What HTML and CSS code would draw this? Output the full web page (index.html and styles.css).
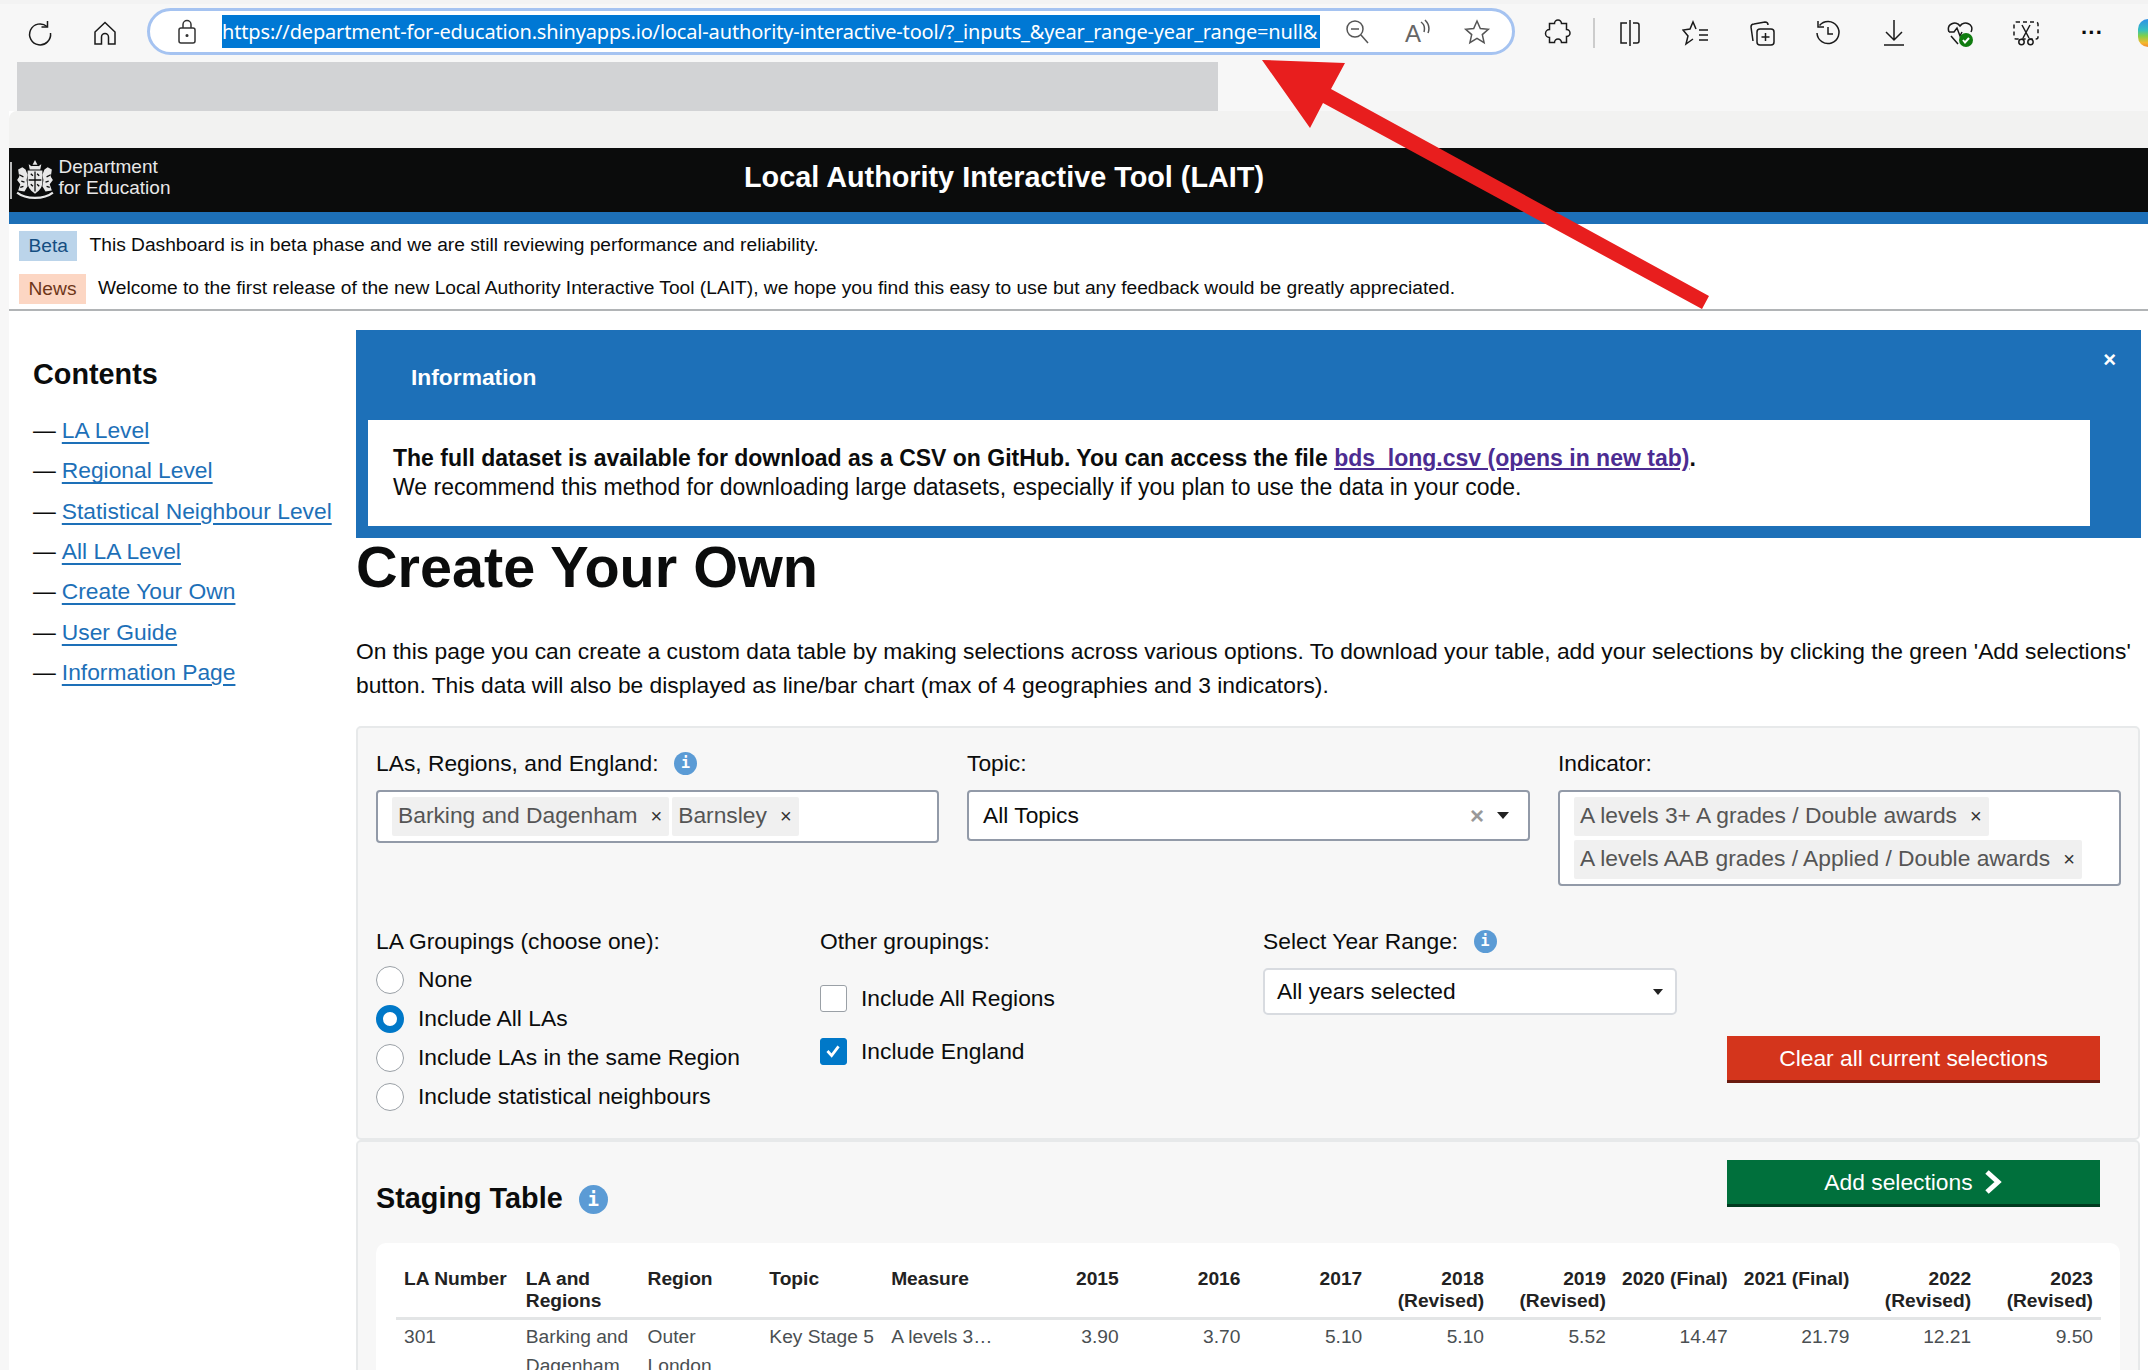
FILE: index.html
```html
<!DOCTYPE html>
<html lang="en">
<head>
<meta charset="utf-8">
<title>Local Authority Interactive Tool (LAIT)</title>
<link rel="stylesheet" href="styles.css">
</head>
<body>
<div class="toolbar">
  <svg class="ti reload" viewBox="0 0 28 28"><path d="M21 7.500A10.500 10.500 0 1 0 24.500 14"/><path d="M21.500 2v6h-6"/></svg>
  <svg class="ti home" viewBox="0 0 28 28"><path d="M4 13 14 3.500 24 13v12h-6.500v-7a3.500 3.500 0 0 0-7 0v7H4z"/></svg>
  <div class="address">
    <svg class="ti lock" viewBox="0 0 28 28"><rect x="6" y="10" width="16" height="15" rx="2"/><path d="M10 10V6.500a4 4 0 0 1 8 0V10"/><circle cx="14" cy="17.500" r=".8"/></svg>
    <div class="url"><span>https://department-for-education.shinyapps.io/local-authority-interactive-tool/?_inputs_&amp;year_range-year_range=null&amp;</span></div>
    <svg class="ti ai zoomi" viewBox="0 0 28 28"><circle cx="12" cy="11" r="8"/><path d="M8 11h8M18 17l7 8"/></svg>
    <svg class="ti ai" viewBox="0 0 28 28"><text x="2" y="24" class="aloud">A</text><path d="M18 4c3 2 4 6 3 10M22 2c3 3 5 8 3 13"/></svg>
    <svg class="ti ai" viewBox="0 0 28 28"><path d="m14 3 3.300 7.500 8 .8-6 5.300 1.800 8-7.100-4.200-7.100 4.200 1.800-8-6-5.300 8-.8z"/></svg>
  </div>
  <div class="tools">
    <svg class="ti" viewBox="0 0 28 28"><path d="M11 6a3.500 3.500 0 0 1 7 0h5v6a3.500 3.500 0 0 1 0 7v6h-5a3.500 3.500 0 0 0-7 0H6v-5a3.500 3.500 0 0 1 0-8V6z" transform="translate(-.5 -1.500)"/></svg>
    <i class="sep"></i>
    <svg class="ti" viewBox="0 0 28 28"><path d="M14 1v26M11 4H5v20h6M17 4h4a2 2 0 0 1 2 2v16a2 2 0 0 1-2 2h-4"/></svg>
    <svg class="ti" viewBox="0 0 28 28"><path d="M11 20 4 25l2-8-5-6 7-1 3-7 3 7"/><path d="M17 11h9M17 16h9M17 21h9"/></svg>
    <svg class="ti" viewBox="0 0 28 28"><path d="M5 22 3 8c0-2 1-3 3-3l11-2c2 0 3 1 3 3"/><rect x="9" y="10" width="17" height="16" rx="3"/><path d="M17.500 14v8M13.500 18h8"/></svg>
    <svg class="ti" viewBox="0 0 28 28"><path d="M5.500 6.500A11 11 0 1 1 3 14"/><path d="M4 2v6h6M14 8v7h5"/></svg>
    <svg class="ti" viewBox="0 0 28 28"><path d="M14 1v20M6 13l8 8 8-8M4 26h20"/></svg>
    <svg class="ti" viewBox="0 0 28 28"><path d="M3 13C0 5 10 1 14 7c4-6 15-2 11 6M3 13h5l3-4 3 8 2-4M5 17l7 8"/><circle class="ok" cx="20" cy="21" r="7"/><path class="okc" d="m17 21 2 2.500 4-4.500"/></svg>
    <svg class="ti" viewBox="0 0 28 28"><rect x="2" y="3" width="24" height="17" rx="2" stroke-dasharray="4 3"/><path d="m10 6 7 13M18 6l-7 13"/><circle cx="9.500" cy="23" r="2.700"/><circle cx="18.500" cy="23" r="2.700"/></svg>
    <span class="dots">···</span>
    <i class="copilot"></i>
  </div>
</div>
<div class="favbar"><div class="favblock"></div></div>
<div class="page">
  <div class="tabstrip"></div>
  <header class="head">
    <div class="logo">
      <i class="logobar"></i>
      <svg class="crest" viewBox="0 0 38 38">
        <path class="crestf" d="M14 9l-1-5 3 2 3-6 3 6 3-2-1 5z"/>
        <path class="crestf" d="M3 9l4-2 3 2 2 5-1 5 1 6-3 5-6-1 2-6-3-4 2-3zM35 9l-4-2-3 2-2 5 1 5-1 6 3 5 6-1-2-6 3-4-2-3z"/>
        <path class="crestf" d="M12 10h14v11c0 6-4 9-7 11-3-2-7-5-7-11z"/>
        <path class="crests" d="M2 31c5 4 10 5 17 5s12-1 17-5"/>
        <path class="crestd" d="M19 11v19M13 19h12M15 13l2 2M21 13l2 2M15 23l2 2M21 23l2 2M4 14l4 2M6 20l3 1M5 26l3-1M34 14l-4 2M32 20l-3 1M33 26l-3-1M15 5h8"/>
      </svg>
      <div class="logotext">Department<br>for Education</div>
    </div>
    <h2 class="apptitle">Local Authority Interactive Tool (LAIT)</h2>
  </header>
  <div class="blueline"></div>
  <section class="notices">
    <div class="notice beta-row"><strong class="tag beta">Beta</strong><span>This Dashboard is in beta phase and we are still reviewing performance and reliability.</span></div>
    <div class="notice news-row"><strong class="tag news">News</strong><span>Welcome to the first release of the new Local Authority Interactive Tool (LAIT), we hope you find this easy to use but any feedback would be greatly appreciated.</span></div>
  </section>
  <div class="main">
    <nav class="side">
      <h3>Contents</h3>
      <ul>
        <li><a href="#">LA Level</a></li>
        <li><a href="#">Regional Level</a></li>
        <li><a href="#">Statistical Neighbour Level</a></li>
        <li><a href="#">All LA Level</a></li>
        <li><a href="#">Create Your Own</a></li>
        <li><a href="#">User Guide</a></li>
        <li><a href="#">Information Page</a></li>
      </ul>
    </nav>
    <main class="content">
      <div class="infobox">
        <div class="infohead">Information<span class="close">×</span></div>
        <div class="infobody">
          <p><b>The full dataset is available for download as a CSV on GitHub. You can access the file <a href="#">bds_long.csv (opens in new tab)</a>.</b></p>
          <p>We recommend this method for downloading large datasets, especially if you plan to use the data in your code.</p>
        </div>
      </div>
      <h1>Create Your Own</h1>
      <p class="lead">On this page you can create a custom data table by making selections across various options. To download your table, add your selections by clicking the green 'Add selections' button. This data will also be displayed as line/bar chart (max of 4 geographies and 3 indicators).</p>
      <div class="panel form">
        <div class="row-top">
          <div>
            <label>LAs, Regions, and England: <span class="info">i</span></label>
            <div class="sel">
              <span class="chip">Barking and Dagenham<u>×</u></span><span class="chip">Barnsley<u>×</u></span>
            </div>
          </div>
          <div>
            <label>Topic:</label>
            <div class="sel single"><span class="val">All Topics</span><span class="clr">×</span><i class="caret"></i></div>
          </div>
          <div>
            <label>Indicator:</label>
            <div class="sel">
              <span class="chip">A levels 3+ A grades / Double awards<u>×</u></span><span class="chip">A levels AAB grades / Applied / Double awards<u>×</u></span>
            </div>
          </div>
        </div>
        <div class="row-two">
          <div>
            <label>LA Groupings (choose one):</label>
            <div class="radio"><i></i>None</div>
            <div class="radio on"><i></i>Include All LAs</div>
            <div class="radio"><i></i>Include LAs in the same Region</div>
            <div class="radio"><i></i>Include statistical neighbours</div>
          </div>
          <div>
            <label>Other groupings:</label>
            <div class="check first"><i></i>Include All Regions</div>
            <div class="check on"><i><svg viewBox="0 0 26 26"><path d="m7 13 4.500 5L19 8"/></svg></i>Include England</div>
          </div>
          <div>
            <label>Select Year Range: <span class="info">i</span></label>
            <div class="yearsel">All years selected<i class="caret small"></i></div>
          </div>
          <div class="btncol"><button class="btn red">Clear all current selections</button></div>
        </div>
      </div>
      <div class="panel staging">
        <div class="staghead">
          <h3>Staging Table <span class="info big">i</span></h3>
          <button class="btn green">Add selections<svg viewBox="0 0 19 26"><path d="M3 3l11 10-11 10"/></svg></button>
        </div>
        <div class="card">
          <table>
            <thead>
              <tr><th>LA Number</th><th>LA and Regions</th><th>Region</th><th>Topic</th><th>Measure</th><th class="n">2015</th><th class="n">2016</th><th class="n">2017</th><th class="n">2018 (Revised)</th><th class="n">2019 (Revised)</th><th class="n">2020 (Final)</th><th class="n">2021 (Final)</th><th class="n">2022 (Revised)</th><th class="n">2023 (Revised)</th></tr>
            </thead>
            <tbody>
              <tr><td>301</td><td>Barking and Dagenham</td><td>Outer London</td><td>Key Stage 5</td><td>A levels 3…</td><td class="n">3.90</td><td class="n">3.70</td><td class="n">5.10</td><td class="n">5.10</td><td class="n">5.52</td><td class="n">14.47</td><td class="n">21.79</td><td class="n">12.21</td><td class="n">9.50</td></tr>
            </tbody>
          </table>
        </div>
      </div>
    </main>
  </div>
</div>
<svg class="arrow" viewBox="0 0 2148 1370"><polygon points="1262,60 1345,63 1331,89 1709,296 1702,309 1323,103 1310,128"/></svg>
</body>
</html>
```
FILE: styles.css
```css
html, body { margin: 0; height: 1370px; overflow: hidden; background: #fff; }
body { font-family: "Liberation Sans", Arial, sans-serif; color: #0b0c0c; width: 2148px; position: relative; }
* { box-sizing: border-box; }

/* Browser chrome */
.toolbar { height: 62px; background: #f7f7f7; border-top: 4px solid #f3f3f3; display: flex; align-items: center; overflow: hidden; padding: 0 0 0 26px; }
.ti { width: 28px; height: 28px; fill: none; stroke: #1a1a1a; stroke-width: 1.5; flex: none; }
.home { margin-left: 37px; }
.address { flex: none; margin-left: 28px; width: 1368px; height: 47px; margin-top: -3px; border: 3px solid #a5c3f1; border-radius: 24px; background: #fff; display: flex; align-items: center; padding-left: 23px; }
.lock { stroke: #333; width: 28px; margin-right: 21px; }
.url { width: 1098px; height: 33px; background: #0078d4; color: #fff; overflow: hidden; white-space: nowrap; font: 20px/33px "Noto Sans", sans-serif; letter-spacing: -.16px; flex: none; }
.ai { stroke: #555; margin-left: 32px; }
.zoomi { margin-left: 23px; }
.aloud { font: 24px "Liberation Sans", sans-serif; fill: #666; stroke: none; }
.tools { display: flex; align-items: center; margin-left: 29px; }
.tools .ti { margin-right: 38px; }
.tools .ti:first-child { margin-right: 21px; }
.sep { width: 2px; height: 30px; background: #ccc; margin-right: 21px; }
.ok { fill: #107c10; stroke: none; }
.okc { stroke: #fff; stroke-width: 2; }
.dots { width: 28px; text-align: center; font: bold 22px "Liberation Sans", sans-serif; margin-right: 32px; }
.copilot { width: 20px; height: 28px; border-radius: 10px 10px 4px 10px; background: linear-gradient(#2d8fe8 0%, #35c0c0 40%, #7fd04a 60%, #f5b92e 85%, #f08a30 100%); }
.favbar { height: 49px; background: #f7f7f7; padding-left: 17px; }
.favblock { width: 1201px; height: 49px; background: #d2d3d5; }

/* Page */
.page { margin-left: 9px; }
.tabstrip { height: 37px; background: #f2f2f1; border-radius: 8px 0 0 0; }
body::before { content: ""; position: absolute; left: 0; top: 111px; bottom: 0; width: 9px; background: #f7f7f7; }
.head { height: 64px; background: #0b0c0c; display: flex; align-items: center; position: relative; }
.logo { display: flex; align-items: center; height: 64px; color: #e8e8e8; }
.logobar { width: 1.5px; height: 37px; background: #bbb; margin: 0 3.5px 0 1px; }
.crest { width: 40px; height: 40px; margin-right: 3.5px; }
.crestf { fill: #e8e8e8; }
.crests { fill: none; stroke: #e8e8e8; stroke-width: 2; }
.crestd { fill: none; stroke: #0b0c0c; stroke-width: 1.2; }
.logotext { font-size: 19px; line-height: 21px; margin-top: -7px; }
.apptitle { position: absolute; left: 0; width: 1990px; text-align: center; margin: -5px 0 0; color: #fff; font-size: 28.8px; font-weight: bold; }
.blueline { height: 12px; background: #1d70b8; }
.notices { height: 87px; border-bottom: 2px solid #b1b4b6; padding: 7px 0 0 10px; }
.notice { display: flex; align-items: center; font-size: 19.2px; line-height: 28px; height: 30px; }
.notice span { margin-bottom: 2px; }
.news-row { margin-top: 13px; }
.tag { font-weight: normal; height: 30px; line-height: 29px; padding: 0 9.5px; margin-right: 12px; color: #144e81; }
.beta { background: #bbd4ea; }
.news { background: #fcd6c3; color: #6e3619; }

.main { display: flex; }
.side { width: 347px; flex: none; padding-left: 24px; }
.side h3 { font-size: 28.8px; margin: 46px 0 0; line-height: 34px; color: #0b0c0c; }
.side ul { list-style: none; margin: 19px 0 0; padding: 0; }
.side li { font-size: 22.8px; line-height: 40.33px; height: 40.33px; }
.side li::before { content: "—"; margin-right: 6px; color: #0b0c0c; }
.side a { color: #1d70b8; text-decoration: underline; text-decoration-thickness: 1.5px; text-underline-offset: 4px; }

.content { width: 1785px; flex: none; padding-top: 19px; }
.infobox { background: #1d70b8; height: 208px; padding: 0 51px 12px 12px; width: 1785px; position: relative; }
.infohead { height: 90px; color: #fff; font-weight: bold; font-size: 22.8px; line-height: 94px; padding-left: 43px; }
.close { position: absolute; right: 25px; top: 12px; font-size: 22px; line-height: 36px; }
.infobody { background: #fff; height: 106px; padding: 24px 25px 0; font-size: 23px; line-height: 29px; }
.infobody p { margin: 0; }
.infobody a { color: #4c2c92; text-decoration: underline; }
h1 { font-size: 57.6px; line-height: 64px; margin: -3px 0 0; color: #0b0c0c; font-weight: bold; }
.lead { font-size: 22.8px; line-height: 34px; margin: 35px 0 0; width: 1785px; color: #0b0c0c; }

.panel { width: 1784px; background: #f7f7f7; border: 2px solid #e7e9ea; border-radius: 5px; }
.form { height: 414px; margin-top: 24px; padding: 20px 18px 0; }
label { display: block; font-size: 22.8px; line-height: 30px; font-weight: normal; }
.row-top { display: grid; grid-template-columns: 563px 563px 563px; column-gap: 28px; height: 178px; }
.sel { margin-top: 12px; background: #fff; border: 2px solid #929aa8; border-radius: 4px; padding: 5px 14px 5px; display: flex; flex-wrap: wrap; gap: 4px 3px; min-height: 53px; }
.chip { height: 39px; line-height: 37px; background: #f0f0f0; color: #555; font-size: 22.8px; padding: 0 7px 0 6px; border-radius: 2px; }
.chip u { text-decoration: none; font-size: 20px; margin-left: 13px; color: #333; }
.single { height: 51px; min-height: 51px; align-items: center; padding: 0 14px; color: #0b0c0c; }
.val { font-size: 22.8px; flex: 1; }
.clr { color: #999; font-size: 24px; font-weight: bold; margin-right: 10px; }
.caret { width: 0; height: 0; border: 6px solid transparent; border-top: 7px solid #222; border-bottom: 0; margin-right: 5px; }
.caret.small { border-width: 5px; border-top-width: 6px; border-bottom-width: 0; margin: 0; }
.row-two { display: grid; grid-template-columns: 444px 443px 464px 373px; }
.row-two label { margin-bottom: 4px; }
.radio { display: flex; align-items: center; height: 39px; font-size: 22.8px; }
.radio i { width: 28px; height: 28px; border-radius: 50%; background: #fff; border: 1.5px solid #9aa0a6; margin-right: 14px; flex: none; }
.radio.on i { border: 7px solid #0078c8; }
.check { display: flex; align-items: center; height: 53px; font-size: 22.8px; }
.check.first { margin-top: 16px; }
.check i { width: 27px; height: 27px; background: #fff; border: 1.5px solid #9aa0a6; border-radius: 3px; margin-right: 14px; flex: none; }
.check.on i { background: #0078c8; border-color: #0078c8; }
.check svg { width: 24px; height: 24px; display: block; fill: none; stroke: #fff; stroke-width: 3; }
.yearsel { margin-top: 12px; width: 414px; height: 47px; background: #fff; border: 2px solid #d8dbe0; border-radius: 5px; font-size: 22.8px; padding: 0 12px; display: flex; align-items: center; justify-content: space-between; }
.btncol { padding-top: 110px; }
.btn { width: 373px; height: 47px; border: 0; border-bottom: 3px solid #000; color: #fff; font: 22.8px "Liberation Sans", sans-serif; display: flex; align-items: center; justify-content: center; padding: 0; }
.red { background: #d4351c; border-color: #6a1a0e; }
.green { background: #00703c; border-color: #003a1f; }
.green svg { width: 19px; height: 26px; fill: none; stroke: #fff; stroke-width: 5; margin-left: 11px; }
.info { display: inline-flex; width: 23px; height: 23px; border-radius: 50%; background: #5b9bd5; color: #fff; font: bold 15px/23px "DejaVu Sans Mono", monospace; justify-content: center; vertical-align: 3px; margin-left: 9px; }
.info.big { width: 29px; height: 29px; font-size: 19px; line-height: 29px; vertical-align: 2px; margin-left: 8px; }

.staging { height: 260px; padding: 18px 19px 0 18px; }
.staghead { display: flex; justify-content: space-between; height: 83px; padding-right: 19px; }
.staghead h3 { margin: 0; font-size: 28.8px; line-height: 40px; padding-top: 18px; }
.card { background: #fff; border-radius: 10px; width: 1744px; height: 200px; padding: 25px 20px 0; }
table { table-layout: fixed; width: 1705px; border-collapse: collapse; font-size: 19.2px; }
th { text-align: left; vertical-align: top; font-weight: bold; line-height: 22px; padding: 0 8px 5px; border-bottom: 3px solid #e3e5e6; color: #222; }
td { vertical-align: top; line-height: 28.5px; padding: 3px 8px; color: #4a4f52; }
.n { text-align: right; }

.arrow { position: absolute; left: 0; top: 0; width: 2148px; height: 1370px; pointer-events: none; }
.arrow polygon { fill: #e81e1e; }
```
